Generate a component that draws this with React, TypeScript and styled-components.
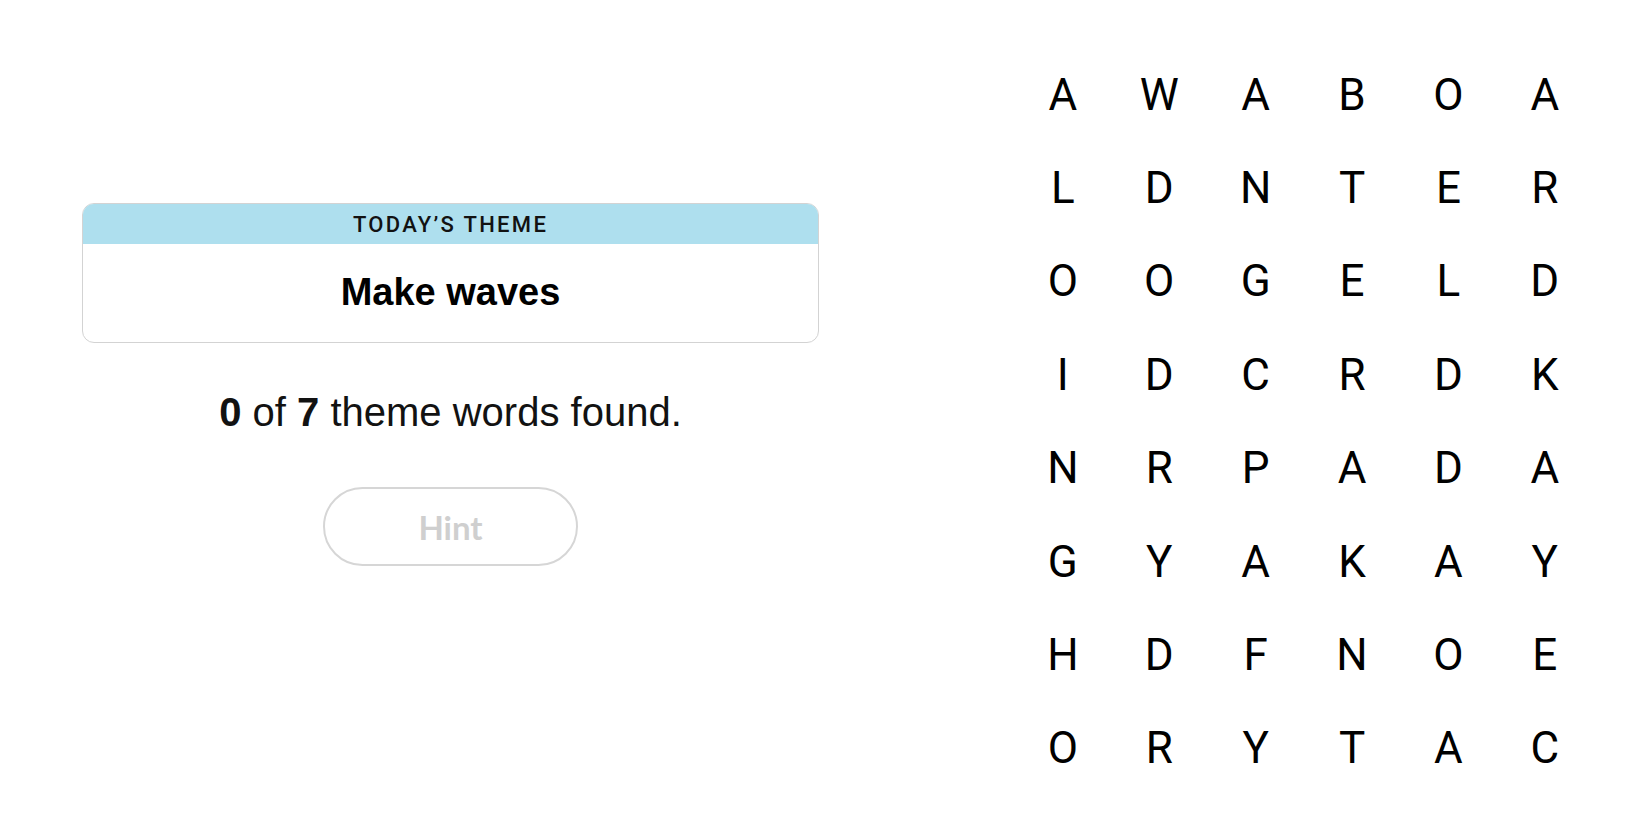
import styled, { createGlobalStyle } from 'styled-components';

const GlobalStyle = createGlobalStyle`
	html, body {
		margin: 0;
		padding: 0;
		background: #ffffff;
	}
	body {
		font-family: "Liberation Sans", Arial, sans-serif;
		color: #000000;
	}
`;

const Page = styled.main`
	box-sizing: border-box;
	display: flex;
	align-items: flex-start;
	height: 825px;
	padding: 48px 57px 0 82px;
	overflow: hidden;
`;

const SidePanel = styled.section`
	display: flex;
	flex-direction: column;
	align-items: center;
	width: 737px;
	padding-top: 155px;
`;

const ThemeCard = styled.div`
	box-sizing: border-box;
	width: 100%;
	height: 140px;
	border: 1px solid #d3d3d3;
	border-radius: 12px;
	overflow: hidden;
	display: flex;
	flex-direction: column;
`;

const ThemeHeader = styled.div`
	display: flex;
	align-items: center;
	justify-content: center;
	height: 40px;
	background-color: #aedfee;
	font-family: Roboto, "Liberation Sans", sans-serif;
	font-size: 22px;
	font-weight: 500;
	letter-spacing: 2.3px;
	color: #121212;
`;

const ThemeBody = styled.div`
	flex: 1;
	display: flex;
	align-items: center;
	justify-content: center;
	font-size: 38px;
	font-weight: 700;
	padding-bottom: 2px;
`;

const Progress = styled.p`
	margin: 45px 0 0;
	font-size: 40px;
	line-height: 48px;
	color: #121212;

	b {
		font-weight: 700;
	}
`;

const HintButton = styled.button`
	box-sizing: border-box;
	margin-top: 51px;
	width: 255px;
	height: 79px;
	border: 2px solid #d6d6d6;
	border-radius: 40px;
	background: #ffffff;
	color: #cfcfcf;
	font-family: Lato, "Liberation Sans", sans-serif;
	font-size: 33px;
	font-weight: 700;
	cursor: default;
`;

const LetterGrid = styled.div`
	margin-left: auto;
	display: grid;
	grid-template-columns: repeat(6, 96.4px);
	grid-auto-rows: 93.4px;
`;

const Letter = styled.span`
	display: flex;
	align-items: center;
	justify-content: center;
	font-family: Roboto, "Liberation Sans", sans-serif;
	font-size: 44px;
	font-weight: 400;
	color: #000000;
`;

const rows = [
	'AWABOA',
	'LDNTER',
	'OOGELD',
	'IDCRDK',
	'NRPADA',
	'GYAKAY',
	'HDFNOE',
	'ORYTAC',
];

function App() {
	return (
		<>
			<GlobalStyle />
			<Page>
				<SidePanel>
					<ThemeCard>
						<ThemeHeader>TODAY’S THEME</ThemeHeader>
						<ThemeBody>Make waves</ThemeBody>
					</ThemeCard>
					<Progress>
						<b>0</b> of <b>7</b> theme words found.
					</Progress>
					<HintButton disabled>Hint</HintButton>
				</SidePanel>
				<LetterGrid>
					{rows.map((row, r) =>
						row.split('').map((ch, c) => (
							<Letter key={`${r}-${c}`}>{ch}</Letter>
						))
					)}
				</LetterGrid>
			</Page>
		</>
	);
}

export default App;
